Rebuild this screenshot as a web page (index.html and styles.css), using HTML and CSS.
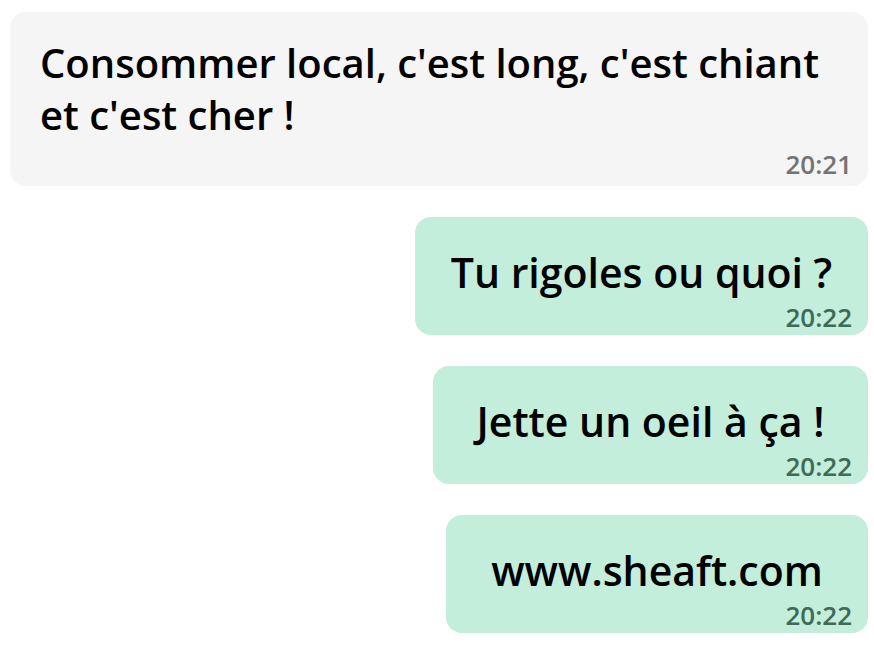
FILE: index.html
```html
<!DOCTYPE html>
<html lang="fr">
<head>
<meta charset="utf-8">
<link rel="stylesheet" href="styles.css">
</head>
<body>
<div class="chat">
  <div class="bubble received">
    <p class="text">Consommer local, c'est long, c'est chiant et c'est cher !</p>
    <span class="time">20:21</span>
  </div>
  <div class="bubble sent w1">
    <p class="text">Tu rigoles ou quoi ?</p>
    <span class="time">20:22</span>
  </div>
  <div class="bubble sent w2">
    <p class="text">Jette un oeil à ça !</p>
    <span class="time">20:22</span>
  </div>
  <div class="bubble sent w3">
    <p class="text">www.sheaft.com</p>
    <span class="time">20:22</span>
  </div>
</div>
</body>
</html>
```
FILE: styles.css
```css
html, body {
  margin: 0;
  background: #ffffff;
}
body {
  font-family: "Open Sans", "Noto Sans", sans-serif;
  color: #000;
}
.chat {
  display: flex;
  flex-direction: column;
  align-items: flex-end;
  gap: 31px;
  padding: 12px 6px 0 10px;
}
.bubble {
  box-sizing: border-box;
  border-radius: 16px;
  display: flex;
  flex-direction: column;
}
.text {
  margin: 0;
  font-weight: 600;
  font-size: 41px;
  line-height: 52px;
}
.time {
  align-self: flex-end;
  font-weight: 600;
  font-size: 26px;
  line-height: 26px;
}
.received {
  width: 100%;
  height: 174px;
  background: #f5f5f5;
  padding: 25px 16px 0 30px;
}
.received .text {
  font-size: 40px;
  padding-right: 24px;
}
.received .time {
  color: #737373;
  margin-top: 10px;
}
.sent {
  height: 118px;
  background: #c3eedb;
  padding: 29px 16px 0 16px;
}
.sent .text {
  text-align: center;
}
.sent .time {
  color: #3f6a55;
  margin-top: 6px;
}
.w1 { width: 453px; }
.w2 { width: 435px; }
.w3 { width: 422px; }
```
